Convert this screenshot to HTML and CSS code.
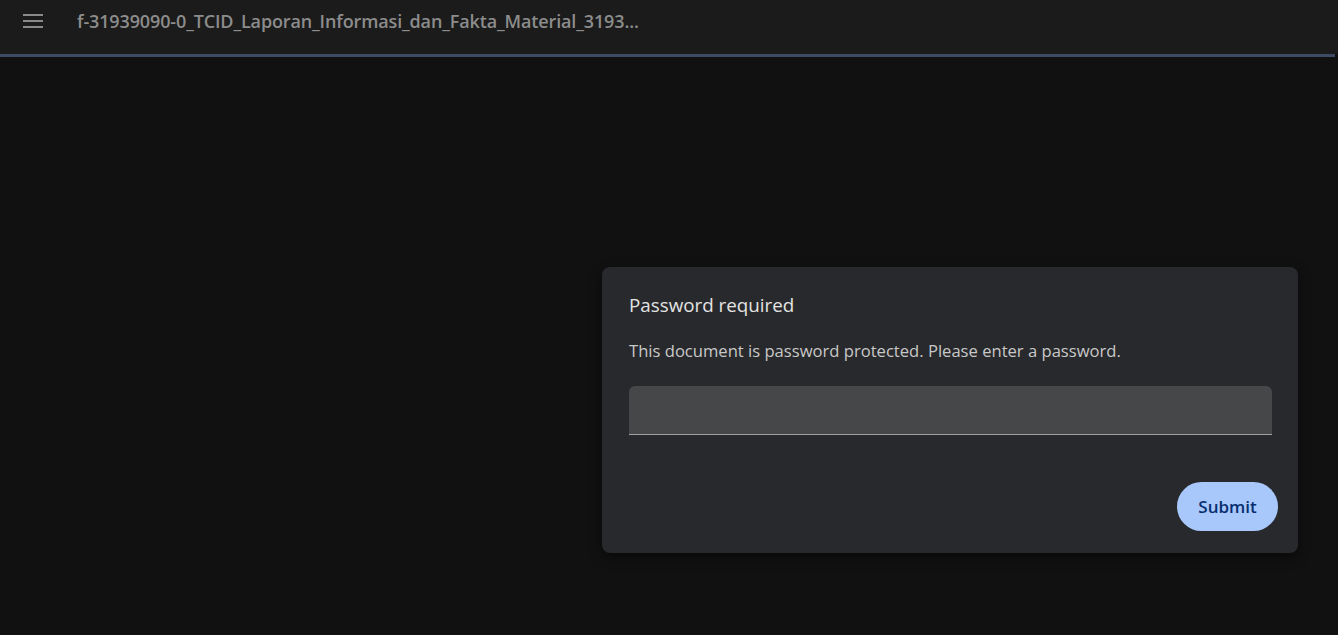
FILE: index.html
```html
<!doctype html>
<html lang="en">
    <head>
        <meta charset="UTF-8" />
        <meta name="viewport" content="width=device-width, initial-scale=1.0" />
        <title>PDF Viewer</title>
        <link rel="stylesheet" href="styles.css">
    </head>
    <body>
        <header class="toolbar">
            <button class="menu-btn" aria-label="Menu">
                <svg width="20" height="14" viewBox="0 0 20 14">
                    <rect x="0" y="0" width="20" height="2" fill="#8a8a8a" />
                    <rect x="0" y="6" width="20" height="2" fill="#8a8a8a" />
                    <rect x="0" y="12" width="20" height="2" fill="#8a8a8a" />
                </svg>
            </button>
            <span class="doc-title">f-31939090-0_TCID_Laporan_Informasi_dan_Fakta_Material_3193...</span>
        </header>
        <div class="progress"><div class="progress-bar"></div></div>

        <main class="viewer">
            <div class="dialog">
                <h2 class="dialog-title">Password required</h2>
                <p class="dialog-text">This document is password protected. Please enter a password.</p>
                <input type="password" class="password-input" />
                <div class="dialog-actions">
                    <button class="submit-btn">Submit</button>
                </div>
            </div>
        </main>
    </body>
</html>
```

FILE: styles.css
```css
* {
    box-sizing: border-box;
}
html,
body {
    height: 100%;
}
body {
    margin: 0;
    background: #111111;
    font-family: "Open Sans", "Noto Sans", sans-serif;
    overflow: hidden;
    display: flex;
    flex-direction: column;
}
.toolbar {
    height: 54px;
    background: #1b1b1b;
    display: flex;
    align-items: center;
    padding-left: 23px;
    flex-shrink: 0;
}
.menu-btn {
    background: none;
    border: none;
    padding: 0;
    width: 20px;
    height: 14px;
    margin-top: -12px;
    display: flex;
}
.doc-title {
    margin-left: 34px;
    margin-top: -12px;
    color: #8c8c8c;
    font-size: 18px;
    font-weight: 600;
    letter-spacing: -0.13px;
}
.progress {
    height: 3px;
    background: #111111;
    flex-shrink: 0;
}
.progress-bar {
    height: 3px;
    width: 1335px;
    background: #3c4a63;
}
.viewer {
    flex: 1;
    display: flex;
    justify-content: flex-end;
    align-items: flex-start;
    padding: 210px 40px 0 0;
}
.dialog {
    width: 696px;
    height: 286px;
    background: #28292c;
    border-radius: 8px;
    padding: 24px 27px 22px 27px;
    box-shadow: 0 4px 12px rgba(0, 0, 0, 0.5);
    display: flex;
    flex-direction: column;
}
.dialog-title {
    margin: 0;
    color: #e3e3e3;
    font-size: 18.8px;
    font-weight: 400;
    line-height: 28px;
}
.dialog-text {
    margin: 19px 0 0 0;
    color: #c8c8c8;
    font-size: 16.6px;
    line-height: 26px;
}
.password-input {
    margin-top: 22px;
    width: 643px;
    height: 49px;
    background: #464748;
    border: none;
    border-bottom: 1px solid #a0a0a0;
    border-radius: 6px 6px 0 0;
    outline: none;
}
.dialog-actions {
    margin-top: auto;
    display: flex;
    justify-content: flex-end;
    margin-right: -7px;
}
.submit-btn {
    width: 101px;
    height: 49px;
    border: none;
    border-radius: 25px;
    background: #a8c7fa;
    color: #062e6f;
    font-family: inherit;
    font-size: 17px;
    font-weight: 600;
}
```
